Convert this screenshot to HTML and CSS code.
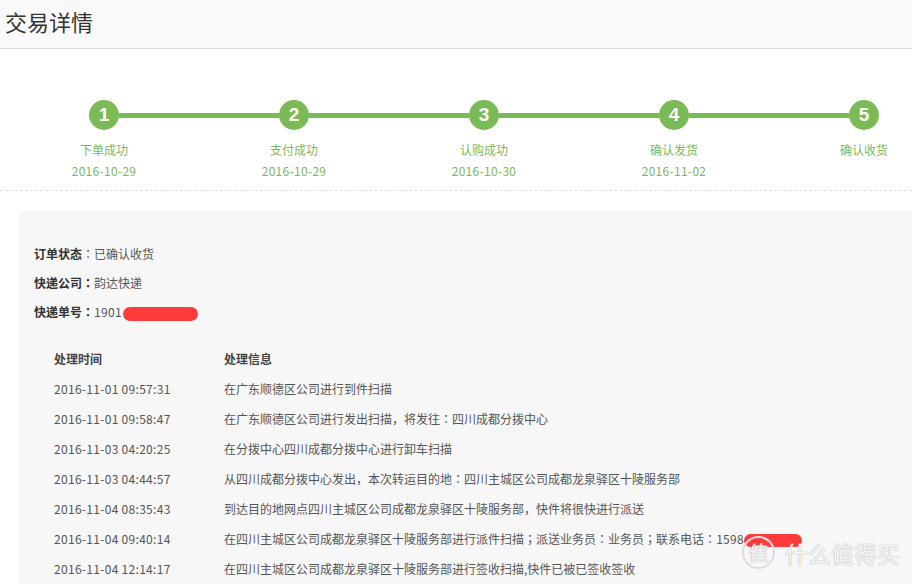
FILE: index.html
```html
<!DOCTYPE html>
<html lang="zh-CN">
<head>
<meta charset="utf-8">
<title>交易详情</title>
<link rel="stylesheet" href="styles.css">
</head>
<body>
<div class="header"><h1 class="title">交易详情</h1></div>

<div class="steps">
  <div class="track">
    <span class="dot">1</span><span class="bar"></span>
    <span class="dot">2</span><span class="bar"></span>
    <span class="dot">3</span><span class="bar"></span>
    <span class="dot">4</span><span class="bar"></span>
    <span class="dot">5</span>
  </div>
  <div class="labels">
    <div class="lab"><div>下单成功</div><div class="num">2016-10-29</div></div>
    <div class="lab"><div>支付成功</div><div class="num">2016-10-29</div></div>
    <div class="lab"><div>认购成功</div><div class="num">2016-10-30</div></div>
    <div class="lab"><div>确认发货</div><div class="num">2016-11-02</div></div>
    <div class="lab"><div>确认收货</div></div>
  </div>
</div>

<div class="panel">
  <div class="info">
    <div class="irow"><b>订单状态</b><span class="p" lang="zh-TW">：</span>已确认收货</div>
    <div class="irow"><b>快递公司<span class="p" lang="zh-TW">：</span></b>韵达快递</div>
    <div class="irow"><b>快递单号<span class="p" lang="zh-TW">：</span></b><span class="num">1901</span><span class="redact r1"></span></div>
  </div>
  <div class="table">
    <div class="trow thead"><span class="c1">处理时间</span><span class="c2">处理信息</span></div>
    <div class="trow"><span class="c1 num">2016-11-01 09:57:31</span><span class="c2">在广东顺德区公司进行到件扫描</span></div>
    <div class="trow"><span class="c1 num">2016-11-01 09:58:47</span><span class="c2">在广东顺德区公司进行发出扫描，将发往<span class="p" lang="zh-TW">：</span>四川成都分拨中心</span></div>
    <div class="trow"><span class="c1 num">2016-11-03 04:20:25</span><span class="c2">在分拨中心四川成都分拨中心进行卸车扫描</span></div>
    <div class="trow"><span class="c1 num">2016-11-03 04:44:57</span><span class="c2">从四川成都分拨中心发出，本次转运目的地<span class="p" lang="zh-TW">：</span>四川主城区公司成都龙泉驿区十陵服务部</span></div>
    <div class="trow"><span class="c1 num">2016-11-04 08:35:43</span><span class="c2">到达目的地网点四川主城区公司成都龙泉驿区十陵服务部，快件将很快进行派送</span></div>
    <div class="trow"><span class="c1 num">2016-11-04 09:40:14</span><span class="c2">在四川主城区公司成都龙泉驿区十陵服务部进行派件扫描<span class="p" lang="zh-TW">；</span>派送业务员<span class="p" lang="zh-TW">：</span>业务员<span class="p" lang="zh-TW">；</span>联系电话<span class="p" lang="zh-TW">：</span><span class="num">1598</span><span class="redact r2"></span></span></div>
    <div class="trow"><span class="c1 num">2016-11-04 12:14:17</span><span class="c2">在四川主城区公司成都龙泉驿区十陵服务部进行签收扫描,快件已被已签收签收</span></div>
  </div>
</div>

<div class="watermark"><span class="wm-circle">值</span><span class="wm-text">什么值得买</span></div>
</body>
</html>
```

FILE: styles.css
```css
html, body {
  margin: 0;
  padding: 0;
  background: #fff;
  overflow: hidden;
}
body {
  font-family: "Noto Sans CJK SC", "Noto Sans", sans-serif;
  font-size: 12px;
  color: #555;
  width: 912px;
  height: 584px;
  position: relative;
}
.num {
  letter-spacing: 0.3px;
}
.p {
  font-family: "Noto Sans CJK TC", "Noto Sans CJK SC", sans-serif;
}
.header {
  height: 48px;
  background: #f9f9f9;
  border-bottom: 1px solid #dcdcdc;
}
.title {
  margin: 0;
  padding-left: 5px;
  font-size: 22px;
  font-weight: normal;
  line-height: 42px;
  color: #333;
}
.steps {
  padding: 51px 0 9px 0;
  border-bottom: 1px dashed #dedede;
}
.track {
  display: flex;
  align-items: center;
  padding-left: 89px;
  height: 30px;
}
.dot {
  width: 30px;
  height: 30px;
  border-radius: 50%;
  background: #7aba57;
  color: #fff;
  font-family: "Liberation Sans", Arial, sans-serif;
  font-weight: bold;
  font-size: 19px;
  line-height: 30px;
  text-align: center;
  flex: none;
}
.bar {
  width: 160px;
  height: 5px;
  background: #7aba57;
  flex: none;
}
.labels {
  display: flex;
  gap: 100px;
  padding-left: 59px;
  margin-top: 10px;
}
.lab {
  width: 90px;
  flex: none;
  text-align: center;
  color: #7ab85b;
  line-height: 20px;
  font-size: 12px;
}
.lab div + div {
  margin-top: 1px;
}
.panel {
  margin: 20px 0 0 19px;
  background: #f7f7f7;
  padding: 28px 0 40px 15px;
  min-height: 400px;
}
.irow {
  line-height: 29px;
  color: #555;
  white-space: nowrap;
}
.irow b {
  color: #333;
  font-weight: bold;
}
.redact {
  display: inline-block;
  background: #ff3a3a;
  vertical-align: middle;
  border-radius: 7px;
}
.r1 {
  width: 75px;
  height: 14px;
  margin-left: 1px;
}
.r2 {
  width: 58px;
  height: 13px;
  margin-left: 0;
}
.table {
  margin-top: 18px;
  padding-left: 20px;
}
.trow {
  display: flex;
  line-height: 30px;
  white-space: nowrap;
}
.c1 {
  width: 170px;
  flex: none;
}
.thead {
  font-weight: bold;
  color: #444;
}
.watermark {
  position: absolute;
  left: 742px;
  top: 536px;
  display: flex;
  align-items: center;
  gap: 10px;
  color: rgba(255, 255, 255, 0.9);
  text-shadow: 0 0 1px #aaa, 0 0 1px #bbb;
}
.wm-circle {
  width: 29px;
  height: 29px;
  border: 2px solid #ddd;
  border-radius: 50%;
  font-size: 20px;
  line-height: 29px;
  text-align: center;
}
.wm-text {
  font-size: 23px;
  line-height: 30px;
}
```
